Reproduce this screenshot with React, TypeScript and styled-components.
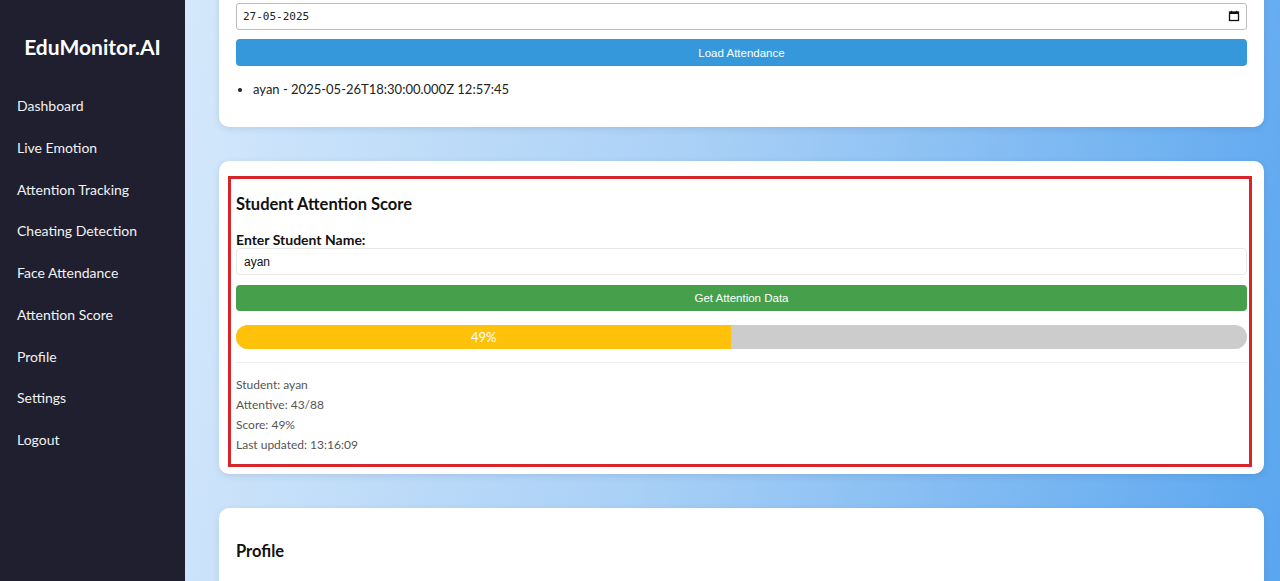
import { useLayoutEffect, useRef } from "react";
import styled, { createGlobalStyle } from "styled-components";

const GlobalStyle = createGlobalStyle`
  html, body { margin: 0; padding: 0; height: 100%; }
  body { font-family: Lato, "Noto Sans", sans-serif; overflow: hidden; }
  * { box-sizing: border-box; }
`;

const navItems = [
    "Dashboard",
    "Live Emotion",
    "Attention Tracking",
    "Cheating Detection",
    "Face Attendance",
    "Attention Score",
    "Profile",
    "Settings",
    "Logout",
];

const CalendarIcon = () => (
    <svg width="12" height="12" viewBox="0 0 12 12" fill="none">
        <rect x="1.5" y="2" width="9" height="8.5" stroke="#111" strokeWidth="1.3" />
        <rect x="1.5" y="2" width="9" height="2" fill="#111" />
        <line x1="3.5" y1="0.8" x2="3.5" y2="2.5" stroke="#111" strokeWidth="1.2" />
        <line x1="8.5" y1="0.8" x2="8.5" y2="2.5" stroke="#111" strokeWidth="1.2" />
    </svg>
);

const App = () => {
    const mainRef = useRef<HTMLDivElement>(null);
    const anchorRef = useRef<HTMLDivElement>(null);

    // page is shown scrolled so the date picker sits at the top edge
    useLayoutEffect(() => {
        const main = mainRef.current;
        const anchor = anchorRef.current;
        if (!main || !anchor) return;
        const offset = anchor.getBoundingClientRect().top - main.getBoundingClientRect().top;
        main.scrollTop = offset - 3;
    }, []);

    return (<Layout>
        <GlobalStyle />
        <Sidebar>
            <Logo>EduMonitor.AI</Logo>
            <Nav>
                {navItems.map((item) => <NavLink key={item}>{item}</NavLink>)}
            </Nav>
        </Sidebar>
        <Main ref={mainRef}>
            <TopSpacer />
            <Card>
                <DateField ref={anchorRef}>
                    <DateInput defaultValue="27-05-2025" />
                    <DateIcon><CalendarIcon /></DateIcon>
                </DateField>
                <ActionButton $color="#3498db" $height={27}>Load Attendance</ActionButton>
                <RecordList>
                    <li>ayan - 2025-05-26T18:30:00.000Z 12:57:45</li>
                </RecordList>
            </Card>
            <Card>
                <Highlight>
                    <CardTitle>Student Attention Score</CardTitle>
                    <Label>Enter Student Name:</Label>
                    <TextInput defaultValue="ayan" />
                    <ActionButton $color="#46a04b" $height={26}>Get Attention Data</ActionButton>
                    <ProgressTrack>
                        <ProgressFill style={{ width: "49%" }}>49%</ProgressFill>
                    </ProgressTrack>
                    <Divider />
                    <Stats>
                        <p>Student: ayan</p>
                        <p>Attentive: 43/88</p>
                        <p>Score: 49%</p>
                        <p>Last updated: 13:16:09</p>
                    </Stats>
                </Highlight>
            </Card>
            <Card>
                <ProfileTitle>Profile</ProfileTitle>
                <Spacer />
            </Card>
        </Main>
    </Layout>);
}

const Layout = styled.div`
    display: flex;
    width: 100vw;
    height: 100vh;
`

const Sidebar = styled.aside`
    width: 185px;
    flex-shrink: 0;
    background: #1f1f2f;
    color: #fff;
    padding: 32px 17px 0;
`

const Logo = styled.h1`
    margin: 0 0 34px;
    font-size: 21px;
    font-weight: 700;
    text-align: center;
    line-height: 30px;
`

const Nav = styled.nav`
    display: flex;
    flex-direction: column;
`

const NavLink = styled.a`
    font-size: 14px;
    line-height: 20px;
    height: 41.75px;
    color: #f2f2f2;
    cursor: pointer;
`

const Main = styled.main`
    flex: 1;
    height: 100vh;
    overflow: hidden;
    padding: 0 16px 40px 34px;
    background: linear-gradient(100deg, #d4e8fb 0%, #a9d0f6 45%, #5aa6ef 100%);
    display: flex;
    flex-direction: column;
    gap: 34px;
`

const TopSpacer = styled.div`
    height: 0;
    margin-bottom: -34px;
    flex-shrink: 0;
    padding-top: 60px;
`

const Card = styled.section`
    background: #fff;
    border-radius: 10px;
    padding: 17px;
    box-shadow: 0 2px 6px rgba(30, 60, 110, 0.12);
    flex-shrink: 0;
`

const Highlight = styled.div`
    margin: -2px -5px -10px -8px;
    border: 3px solid #d7262b;
    padding: 14px 2px 9px 5px;
`

const CardTitle = styled.h3`
    margin: 0 0 16px;
    font-size: 16.5px;
    font-weight: 700;
    line-height: 22px;
    color: #111;
`

const ProfileTitle = styled(CardTitle)`
    margin-top: 15px;
`

const Spacer = styled.div`
    height: 120px;
`

const DateField = styled.div`
    position: relative;
    margin-bottom: 9px;
`

const DateInput = styled.input`
    display: block;
    width: 100%;
    height: 27px;
    padding: 0 6px;
    border: 1px solid #bdbdbd;
    border-radius: 3px;
    font-family: "DejaVu Sans Mono", monospace;
    font-size: 11px;
    color: #222;
`

const DateIcon = styled.span`
    position: absolute;
    right: 7px;
    top: 7px;
    display: flex;
`

const TextInput = styled.input`
    display: block;
    width: 100%;
    height: 27px;
    padding: 0 7px;
    border: 1px solid #e8e8e8;
    border-radius: 4px;
    font-family: "Liberation Sans", Arial, sans-serif;
    font-size: 12px;
    color: #111;
    margin-bottom: 10px;
`

const ActionButton = styled.button<{ $color: string; $height: number }>`
    display: block;
    width: 100%;
    height: ${(p) => p.$height}px;
    border: none;
    border-radius: 4px;
    background: ${(p) => p.$color};
    color: #fff;
    font-family: "Liberation Sans", Arial, sans-serif;
    font-size: 11.5px;
    cursor: pointer;
`

const RecordList = styled.ul`
    margin: 14px 0 12px;
    padding-left: 17px;
    font-size: 13px;
    line-height: 18px;
    color: #222;
`

const Label = styled.label`
    display: block;
    font-size: 14px;
    font-weight: 700;
    line-height: 17px;
    color: #111;
`

const ProgressTrack = styled.div`
    margin-top: 14px;
    height: 24px;
    border-radius: 12px;
    background: #cccccc;
    overflow: hidden;
`

const ProgressFill = styled.div`
    height: 100%;
    background: #ffc10a;
    color: #fff;
    font-size: 13px;
    line-height: 24px;
    text-align: center;
`

const Divider = styled.hr`
    margin: 13px 0 12px;
    border: none;
    border-top: 1px solid #eee;
`

const Stats = styled.div`
    font-size: 12px;
    color: #555;
    p {
        margin: 0;
        line-height: 20px;
    }
`

export default App;
